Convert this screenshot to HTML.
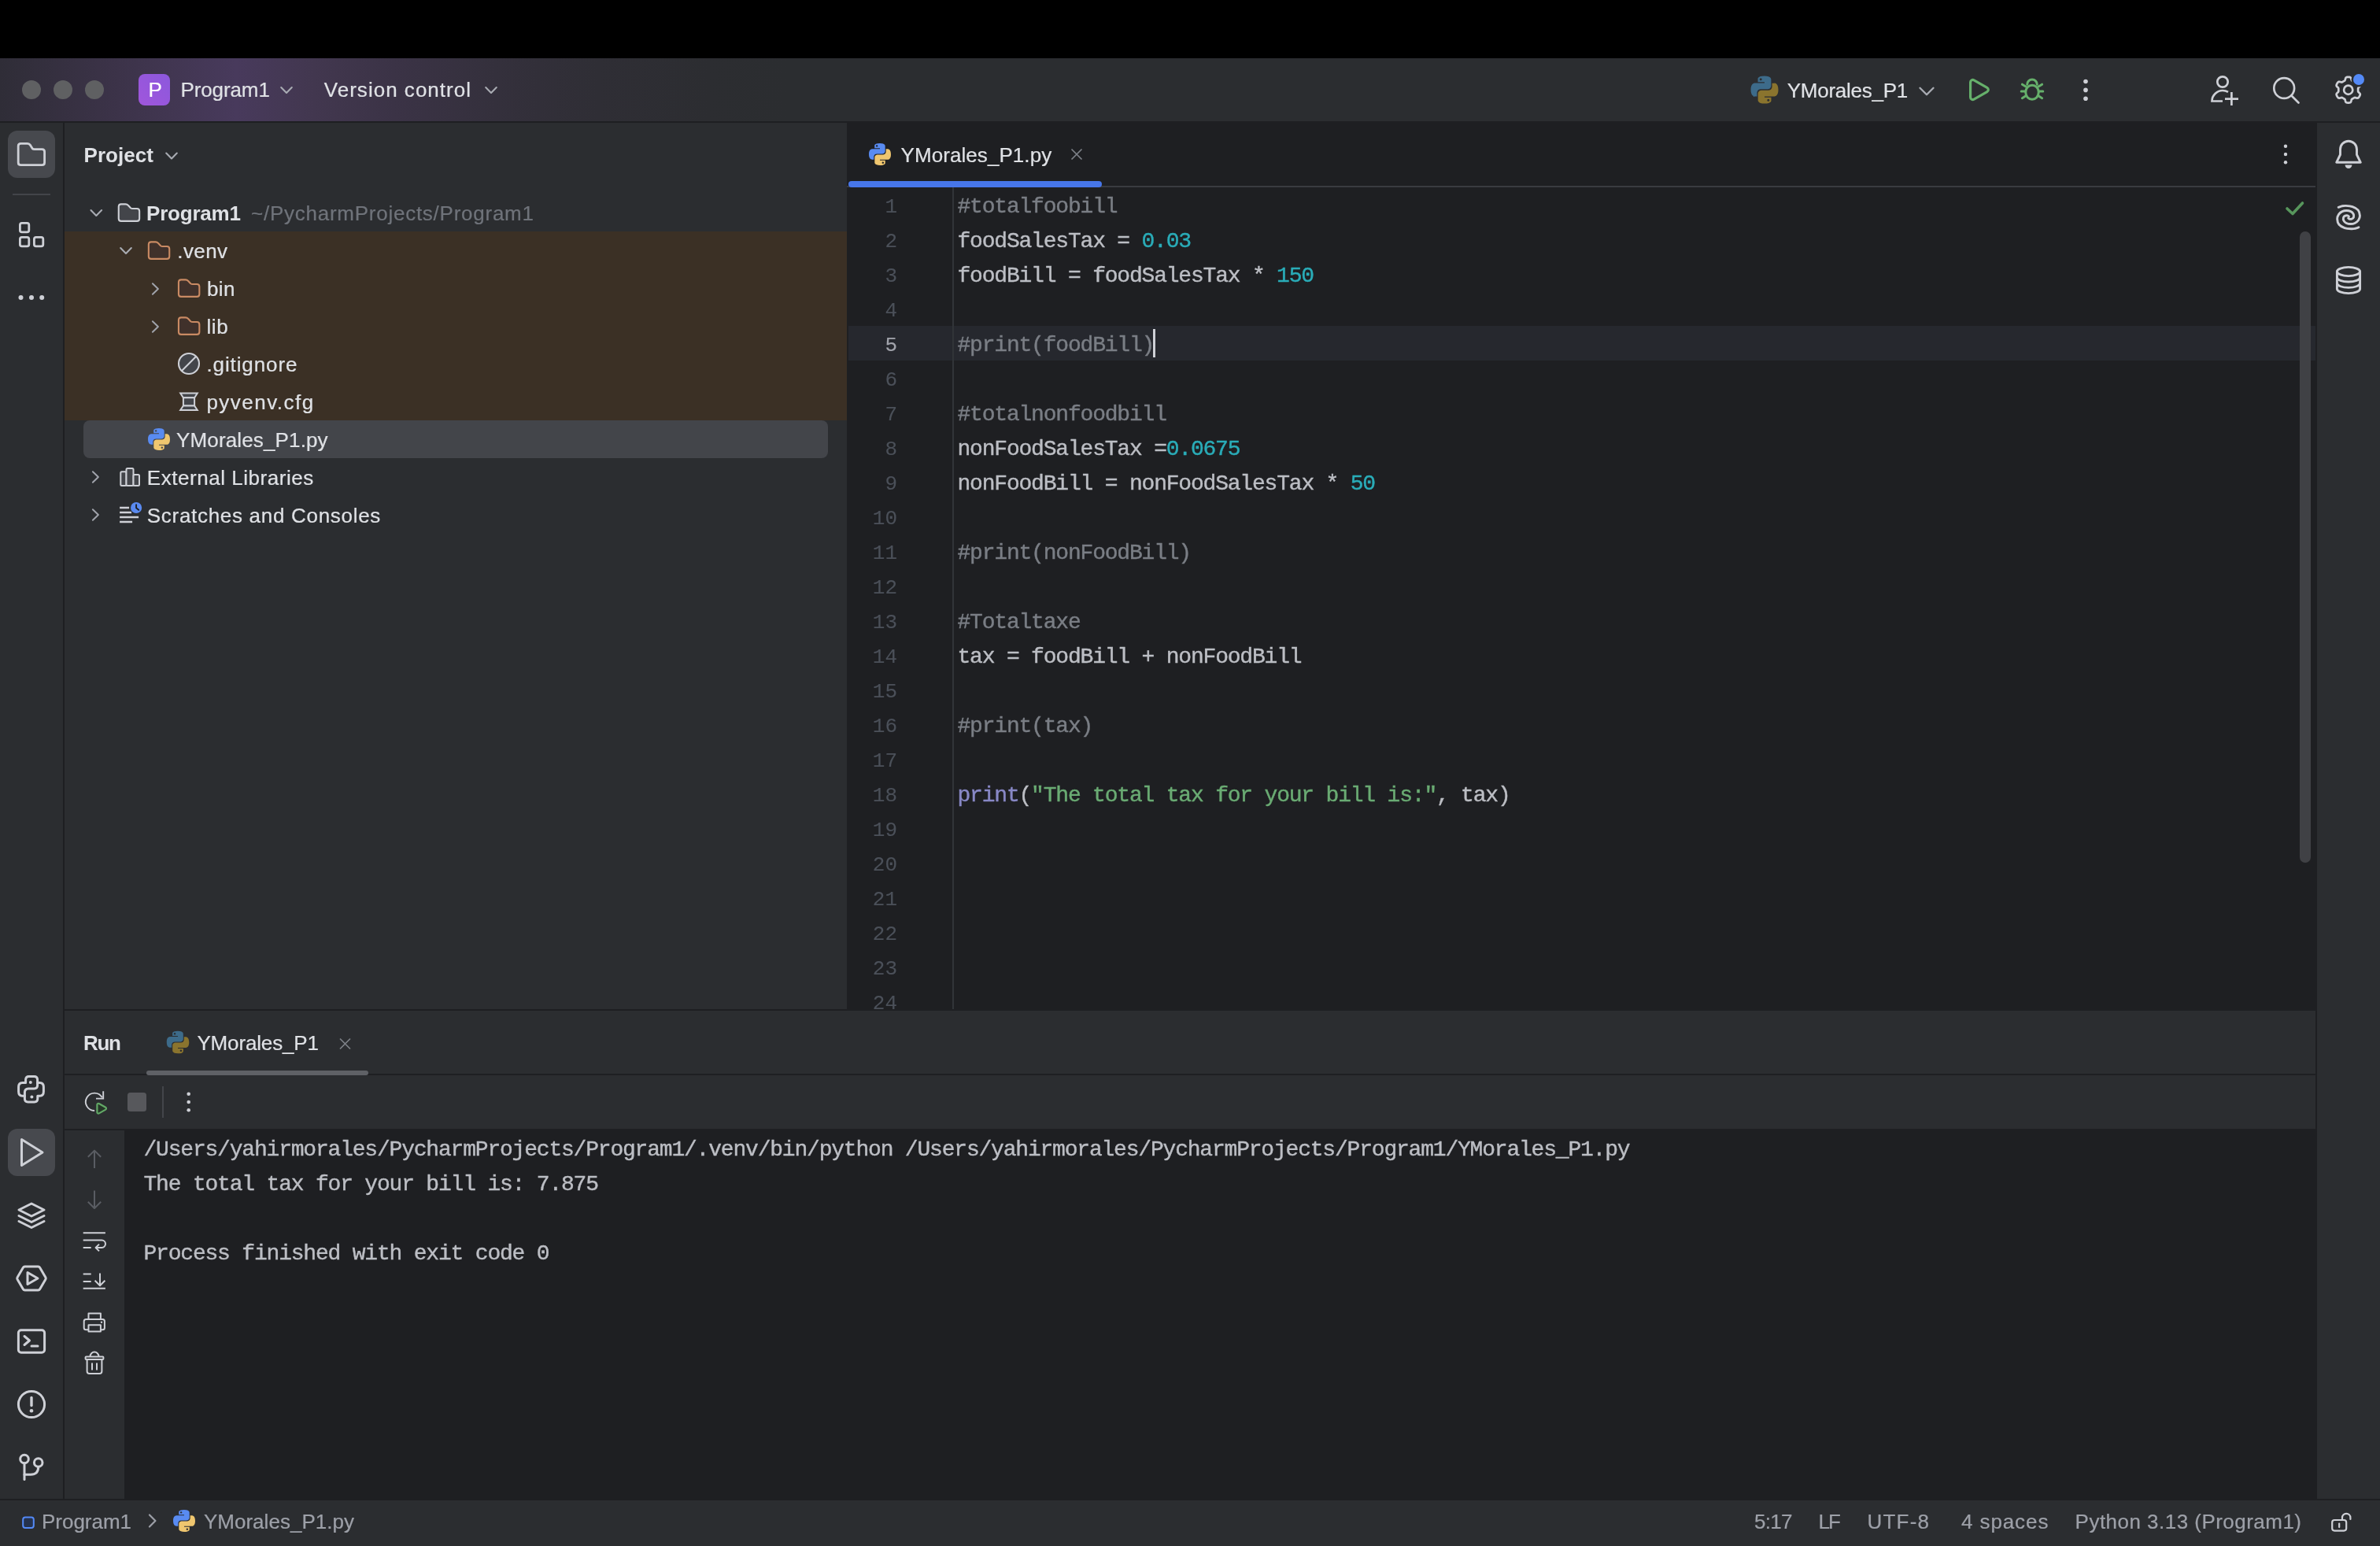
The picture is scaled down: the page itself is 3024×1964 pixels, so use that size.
<!DOCTYPE html>
<html lang="en"><head><meta charset="utf-8"><title>Program1 – YMorales_P1.py</title>
<style>
html,body{margin:0;padding:0;background:#000;}
body{width:3024px;height:1964px;position:relative;overflow:hidden;font-family:"Liberation Sans", sans-serif;font-size:26px;color:#dfe1e5;}
#root div{position:absolute;}
.t{position:absolute;white-space:pre;-webkit-text-stroke:0.22px currentColor;}
svg.ov{position:absolute;left:0;top:0;}

</style></head>
<body><div id="root" style="position:absolute;left:0;top:0;width:3024px;height:1964px;overflow:hidden;background:#2b2d30">
<div style="left:0px;top:0px;width:3024px;height:74px;background:#000;"></div>
<div style="left:0px;top:74px;width:3024px;height:80px;background:#2b2d30;background:linear-gradient(90deg,#2f2d37 0px,#3c3349 150px,#483a5c 300px,#42374f 400px,#3b3346 500px,#34303c 630px,#2f2e35 760px,#2c2d31 900px,#2b2d30 1000px,#2b2d30 100%);"></div>
<div style="left:0px;top:154px;width:3024px;height:2px;background:#1e1f22;"></div>
<div style="left:80px;top:156px;width:2px;height:1748px;background:#1e1f22;"></div>
<div style="left:16px;top:246px;width:48px;height:2px;background:#43454a;"></div>
<div style="left:82px;top:294px;width:994px;height:240px;background:#3b3025;"></div>
<div style="left:1076px;top:156px;width:1866px;height:1126px;background:#1e1f22;"></div>
<div style="left:1076px;top:236px;width:1866px;height:2px;background:#393b40;"></div>
<div style="left:1078px;top:414px;width:1864px;height:44px;background:#26282e;"></div>
<div style="left:1210px;top:238px;width:2px;height:1044px;background:#313438;"></div>
<div style="left:1464.5px;top:418px;width:3px;height:36px;background:#ced0d6;"></div>
<div style="left:2942px;top:156px;width:2px;height:1748px;background:#1e1f22;"></div>
<div style="left:82px;top:1282px;width:2860px;height:2px;background:#1e1f22;"></div>
<div style="left:82px;top:1364px;width:2860px;height:2px;background:#1e1f22;"></div>
<div style="left:206px;top:1380px;width:2px;height:40px;background:#43454a;"></div>
<div style="left:82px;top:1434px;width:2860px;height:2px;background:#1e1f22;"></div>
<div style="left:158px;top:1434px;width:2784px;height:470px;background:#1e1f22;"></div>
<div style="left:0px;top:1904px;width:3024px;height:60px;background:#2b2d30;"></div>
<div style="left:0px;top:1904px;width:3024px;height:2px;background:#1e1f22;"></div>

<svg class="ov" width="3024" height="1964" viewBox="0 0 3024 1964" fill="none">
<defs><linearGradient id="pg" x1="0" y1="1" x2="1" y2="0"><stop offset="0" stop-color="#a056dc"/><stop offset="1" stop-color="#8c58dc"/></linearGradient></defs>
<circle cx="40" cy="114" r="12" fill="#5f6062"/>
<circle cx="80" cy="114" r="12" fill="#5f6062"/>
<circle cx="120" cy="114" r="12" fill="#5f6062"/>
<rect x="176" y="94" width="40" height="40" rx="8" fill="url(#pg)"/>
<path d="M357.2 111.1L364 117.9L370.8 111.1" stroke="#a8abb2" stroke-width="2.1" stroke-linecap="round" stroke-linejoin="round"/>
<path d="M617.2 111.1L624 117.9L630.8 111.1" stroke="#a8abb2" stroke-width="2.1" stroke-linecap="round" stroke-linejoin="round"/>
<path d="M2439.5 111.75L2448 120.25L2456.5 111.75" stroke="#a8abb2" stroke-width="2.4" stroke-linecap="round" stroke-linejoin="round"/>
<g transform="translate(2222.0 94.0) scale(2.5)"><path d="M7.93 1C4.39 1 4.61 2.53 4.61 2.53l.004 1.59h3.38v.48H3.27S1 4.34 1 7.91c0 3.57 1.98 3.44 1.98 3.44h1.18V9.7s-.06-1.98 1.95-1.98h3.35s1.88.03 1.88-1.82V2.84S11.63 1 7.93 1zM6.07 2.07a.61.61 0 110 1.22.61.61 0 010-1.22z" fill="#3d6b8a"/><path d="M8.07 15c3.54 0 3.32-1.53 3.32-1.53l-.004-1.59H8.01v-.48h4.72S15 11.66 15 8.09c0-3.57-1.98-3.44-1.98-3.44h-1.18V6.3s.06 1.98-1.95 1.98H6.54s-1.88-.03-1.88 1.82v3.06S4.37 15 8.07 15zm1.86-1.07a.61.61 0 110-1.22.61.61 0 010 1.22z" fill="#8a742e"/></g>
<path d="M2503.60 104.39A3 3 0 0 1 2508.10 101.79L2524.79 111.40A3 3 0 0 1 2524.79 116.60L2508.10 126.21A3 3 0 0 1 2503.60 123.61Z" stroke="#66b06b" stroke-width="3.2"/>
<g stroke="#66b06b" stroke-width="3" stroke-linecap="round"><rect x="2573.8" y="108.2" width="16.4" height="18" rx="8.2" ry="8.6"/><path d="M2575.7 107.3a6.3 6.3 0 0112.6 0"/><path d="M2573 116h-4.8M2591 116h4.8M2574 110l-4.6-2.8M2590 110l4.6-2.8M2574 121.8l-4.6 2.9M2590 121.8l4.6 2.9"/></g>
<circle cx="2650" cy="103.5" r="2.8" fill="#ced0d6"/>
<circle cx="2650" cy="114.4" r="2.8" fill="#ced0d6"/>
<circle cx="2650" cy="125.30000000000001" r="2.8" fill="#ced0d6"/>
<g stroke="#ced0d6" stroke-width="2.7" stroke-linecap="butt"><circle cx="2824" cy="104" r="6.7"/><path d="M2824 128.5h-13.5c0-8 7-13.5 13.5-13.5 2.5 0 5 .6 7 1.8"/><path d="M2835.4 117v17M2827 125.6h17"/></g>
<g stroke="#ced0d6" stroke-width="2.7" stroke-linecap="round"><circle cx="2902.2" cy="112" r="12.9"/><path d="M2911.5 121.5L2920.5 130.5"/></g>
<path d="M2983.70 97.83L2984.41 97.85L2985.12 97.92L2985.82 98.07L2986.49 98.38L2987.06 99.06L2987.43 100.29L2987.70 101.52L2988.05 102.24L2988.49 102.62L2988.97 102.91L2989.44 103.17L2989.92 103.43L2990.38 103.71L2990.85 103.99L2991.33 104.26L2991.88 104.45L2992.68 104.40L2993.88 104.02L2995.13 103.73L2996.01 103.87L2996.61 104.30L2997.08 104.83L2997.50 105.41L2997.87 106.02L2998.21 106.65L2998.51 107.30L2998.73 107.97L2998.80 108.70L2998.49 109.54L2997.61 110.47L2996.68 111.32L2996.24 111.99L2996.12 112.56L2996.11 113.11L2996.13 113.66L2996.13 114.20L2996.13 114.74L2996.11 115.29L2996.12 115.84L2996.24 116.41L2996.68 117.08L2997.61 117.93L2998.49 118.86L2998.80 119.70L2998.73 120.43L2998.51 121.10L2998.21 121.75L2997.87 122.38L2997.50 122.99L2997.08 123.57L2996.61 124.10L2996.01 124.53L2995.13 124.67L2993.88 124.38L2992.68 124.00L2991.88 123.95L2991.33 124.14L2990.85 124.41L2990.38 124.69L2989.92 124.97L2989.44 125.23L2988.97 125.49L2988.49 125.78L2988.05 126.16L2987.70 126.88L2987.43 128.11L2987.06 129.34L2986.49 130.02L2985.82 130.33L2985.12 130.48L2984.41 130.55L2983.70 130.57L2982.99 130.55L2982.28 130.48L2981.58 130.33L2980.91 130.02L2980.34 129.34L2979.97 128.11L2979.70 126.88L2979.35 126.16L2978.91 125.78L2978.43 125.49L2977.96 125.23L2977.48 124.97L2977.02 124.69L2976.55 124.41L2976.07 124.14L2975.52 123.95L2974.72 124.00L2973.52 124.38L2972.27 124.67L2971.39 124.53L2970.79 124.10L2970.32 123.57L2969.90 122.99L2969.53 122.38L2969.19 121.75L2968.89 121.10L2968.67 120.43L2968.60 119.70L2968.91 118.86L2969.79 117.93L2970.72 117.08L2971.16 116.41L2971.28 115.84L2971.29 115.29L2971.27 114.74L2971.27 114.20L2971.27 113.66L2971.29 113.11L2971.28 112.56L2971.16 111.99L2970.72 111.32L2969.79 110.47L2968.91 109.54L2968.60 108.70L2968.67 107.97L2968.89 107.30L2969.19 106.65L2969.53 106.02L2969.90 105.41L2970.32 104.83L2970.79 104.30L2971.39 103.87L2972.27 103.73L2973.52 104.02L2974.72 104.40L2975.52 104.45L2976.07 104.26L2976.55 103.99L2977.02 103.71L2977.48 103.43L2977.96 103.17L2978.43 102.91L2978.91 102.62L2979.35 102.24L2979.70 101.52L2979.97 100.29L2980.34 99.06L2980.91 98.38L2981.58 98.07L2982.28 97.92L2982.99 97.85Z" stroke="#ced0d6" stroke-width="2.7" stroke-linejoin="round"/>
<circle cx="2983.7" cy="114.2" r="5.6" stroke="#ced0d6" stroke-width="2.7"/>
<circle cx="2997" cy="101" r="9.5" fill="#2b2d30"/><circle cx="2997" cy="101" r="7" fill="#548af7"/>
<rect x="10" y="166" width="60" height="60" rx="12" fill="#47494e"/>
<path d="M23.2 185.6Q23.2 182.4 26.4 182.4H34.732Q36.732 182.4 38.232 184.0L41.232 188.79999999999998Q42.232 189.6 43.732 189.6H53.4Q56.6 189.6 56.6 192.79999999999998V206.4Q56.6 209.6 53.4 209.6H26.4Q23.2 209.6 23.2 206.4Z" fill="none" stroke="#ced0d6" stroke-width="2.8" stroke-linejoin="round"/>
<rect x="25.4" y="283.4" width="11.4" height="11.4" rx="2.4" stroke="#ced0d6" stroke-width="2.8"/>
<rect x="25.4" y="301.4" width="11.4" height="11.4" rx="2.4" stroke="#ced0d6" stroke-width="2.8"/>
<rect x="43.4" y="301.4" width="11.4" height="11.4" rx="2.4" stroke="#ced0d6" stroke-width="2.8"/>
<circle cx="26.5" cy="378" r="3" fill="#ced0d6"/>
<circle cx="40" cy="378" r="3" fill="#ced0d6"/>
<circle cx="53.2" cy="378" r="3" fill="#ced0d6"/>
<g transform="translate(39.5 1383.8)" stroke="#ced0d6" stroke-width="3" stroke-linecap="round" stroke-linejoin="round" stroke-width="2.8"><path d="M-6.9 -8.4V-12Q-6.9 -16.2 -2.7 -16.2H3.9Q8.1 -16.2 8.1 -12V-8.4H11Q15.9 -8.4 15.9 -3V3Q15.9 8.4 11 8.4H8.3V12Q8.3 16.2 4.1 16.2H-3.9Q-8.1 16.2 -8.1 12V8.4H-11Q-15.9 8.4 -15.9 3V-3Q-15.9 -8.4 -11 -8.4Z"/><path d="M8.1 -8.4V-5Q8.1 -0.8 3.9 -0.8H-3.5Q-8.1 -0.6 -8.1 4V8.4"/><circle cx="-0.7" cy="-8.8" r="2" fill="#ced0d6" stroke="none"/><circle cx="0.9" cy="9.6" r="2" fill="#ced0d6" stroke="none"/></g>
<rect x="10" y="1434" width="60" height="60" rx="12" fill="#47494e"/>
<path d="M27.5 1447.5L54 1464L27.5 1480.5Z" stroke="#ced0d6" stroke-width="3" stroke-linecap="round" stroke-linejoin="round"/>
<g transform="translate(40 1544)" stroke="#ced0d6" stroke-width="3" stroke-linecap="round" stroke-linejoin="round"><path d="M0 -15L16 -7L0 1L-16 -7Z"/><path d="M-16 0.5L0 8.5L16 0.5"/><path d="M-16 7.5L0 15.5L16 7.5"/></g>
<g transform="translate(40 1624)" stroke="#ced0d6" stroke-width="3" stroke-linecap="round" stroke-linejoin="round"><path d="M-8.5 -15h17a2.5 2.5 0 012.1 1.2l7.3 12.5a2.5 2.5 0 010 2.6l-7.3 12.5a2.5 2.5 0 01-2.1 1.2h-17a2.5 2.5 0 01-2.1-1.2l-7.3-12.5a2.5 2.5 0 010-2.6l7.3-12.5a2.5 2.5 0 012.1-1.2z"/><path d="M-5 -7.5L8 0L-5 7.5Z"/></g>
<g transform="translate(40 1704)" stroke="#ced0d6" stroke-width="3" stroke-linecap="round" stroke-linejoin="round"><rect x="-16.6" y="-14.2" width="33.2" height="28.4" rx="3.5"/><path d="M-9 -6.5L-2.5 -1L-9 4.5M0 6h8"/></g>
<g transform="translate(40 1784)" stroke="#ced0d6" stroke-width="3" stroke-linecap="round" stroke-linejoin="round"><circle cx="0" cy="0" r="16.6"/><path d="M0 -8.5V1.5" stroke-width="3.4"/><circle cx="0" cy="8.2" r="2.3" fill="#ced0d6" stroke="none"/></g>
<g stroke="#ced0d6" stroke-width="3" stroke-linecap="round" stroke-linejoin="round" stroke-width="2.8"><circle cx="31" cy="1853.5" r="5.3"/><circle cx="48.7" cy="1858" r="5.3"/><path d="M31 1859V1879.5"/><path d="M48.7 1863.5c0 6.5-3.6 9.7-9.7 9.7h-8"/></g>
<path d="M211.2 194.6L218 201.4L224.8 194.6" stroke="#a8abb2" stroke-width="2.1" stroke-linecap="round" stroke-linejoin="round"/>
<rect x="106" y="534" width="946" height="48" rx="8" fill="#43454a"/>
<path d="M115.5 267.1L122.3 273.9L129.1 267.1" stroke="#a8abb2" stroke-width="2.1" stroke-linecap="round" stroke-linejoin="round"/>
<path d="M150.75 262.55Q150.75 259.35 153.95 259.35H159.51Q161.51 259.35 163.01 260.95000000000005L166.01 264.214Q167.01 265.014 168.51 265.014H173.95Q177.14999999999998 265.014 177.14999999999998 268.214V277.65000000000003Q177.14999999999998 280.85 173.95 280.85H153.95Q150.75 280.85 150.75 277.65000000000003Z" fill="#43454a" stroke="#ced0d6" stroke-width="2.1" stroke-linejoin="round"/>
<path d="M153.2 315.1L160 321.9L166.8 315.1" stroke="#a8abb2" stroke-width="2.1" stroke-linecap="round" stroke-linejoin="round"/>
<path d="M188.85000000000002 310.55Q188.85000000000002 307.35 192.05 307.35H197.61Q199.61 307.35 201.11 308.95000000000005L204.11 312.214Q205.11 313.014 206.61 313.014H212.05Q215.25 313.014 215.25 316.214V325.65000000000003Q215.25 328.85 212.05 328.85H192.05Q188.85000000000002 328.85 188.85000000000002 325.65000000000003Z" fill="#40312b" stroke="#c98a63" stroke-width="2.1" stroke-linejoin="round"/>
<path d="M193.9 360.2L200.9 367L193.9 373.8" stroke="#a0a3ab" stroke-width="2.0" stroke-linecap="round" stroke-linejoin="round"/>
<path d="M226.95000000000002 358.55Q226.95000000000002 355.35 230.15 355.35H235.71Q237.71 355.35 239.21 356.95000000000005L242.21 360.214Q243.21 361.014 244.71 361.014H250.15Q253.35 361.014 253.35 364.214V373.65000000000003Q253.35 376.85 250.15 376.85H230.15Q226.95000000000002 376.85 226.95000000000002 373.65000000000003Z" fill="#40312b" stroke="#c98a63" stroke-width="2.1" stroke-linejoin="round"/>
<path d="M193.9 408.2L200.9 415L193.9 421.8" stroke="#a0a3ab" stroke-width="2.0" stroke-linecap="round" stroke-linejoin="round"/>
<path d="M226.95000000000002 406.55Q226.95000000000002 403.35 230.15 403.35H235.71Q237.71 403.35 239.21 404.95000000000005L242.21 408.214Q243.21 409.014 244.71 409.014H250.15Q253.35 409.014 253.35 412.214V421.65000000000003Q253.35 424.85 250.15 424.85H230.15Q226.95000000000002 424.85 226.95000000000002 421.65000000000003Z" fill="#40312b" stroke="#c98a63" stroke-width="2.1" stroke-linejoin="round"/>
<g stroke="#ced0d6" stroke-width="2.1"><circle cx="240" cy="462" r="13" fill="#43454a"/><path d="M230.8 471.2L249.2 452.8"/></g>
<g stroke="#ced0d6" stroke-width="2" fill="#43454a" stroke-linejoin="miter"><path d="M229.2 499.5H250.8L247.1 505.3H232.9Z"/><path d="M232.9 505.3H247.1V515.4H232.9Z"/><path d="M232.9 515.4H247.1L250.8 521H229.2Z"/></g>
<g transform="translate(186.0 542.0) scale(2.0)"><path d="M7.93 1C4.39 1 4.61 2.53 4.61 2.53l.004 1.59h3.38v.48H3.27S1 4.34 1 7.91c0 3.57 1.98 3.44 1.98 3.44h1.18V9.7s-.06-1.98 1.95-1.98h3.35s1.88.03 1.88-1.82V2.84S11.63 1 7.93 1zM6.07 2.07a.61.61 0 110 1.22.61.61 0 010-1.22z" fill="#598bf1"/><path d="M8.07 15c3.54 0 3.32-1.53 3.32-1.53l-.004-1.59H8.01v-.48h4.72S15 11.66 15 8.09c0-3.57-1.98-3.44-1.98-3.44h-1.18V6.3s.06 1.98-1.95 1.98H6.54s-1.88-.03-1.88 1.82v3.06S4.37 15 8.07 15zm1.86-1.07a.61.61 0 110-1.22.61.61 0 010 1.22z" fill="#efc66f"/></g>
<path d="M117.9 599.2L124.9 606L117.9 612.8" stroke="#a0a3ab" stroke-width="2.0" stroke-linecap="round" stroke-linejoin="round"/>
<g stroke="#ced0d6" stroke-width="2" fill="#43454a" stroke-linejoin="round"><rect x="153.3" y="599.3" width="7.2" height="17.7" rx="1.5"/><rect x="160.5" y="595" width="9" height="22" rx="1.5"/><rect x="169.5" y="603.1" width="7.5" height="13.9" rx="1.5"/></g>
<path d="M117.9 647.2L124.9 654L117.9 660.8" stroke="#a0a3ab" stroke-width="2.0" stroke-linecap="round" stroke-linejoin="round"/>
<path d="M152.1 645h12M152.1 651h15M152.1 657h24M152.1 663h16" stroke="#ced0d6" stroke-width="2.3"/>
<circle cx="173.1" cy="645" r="8.2" fill="#2b2d30"/><circle cx="173.1" cy="645" r="7.1" fill="#5a8af0"/><path d="M173.1 641.2v4l3.1 2.6" stroke="#1e1f22" stroke-width="1.9" stroke-linecap="round" stroke-linejoin="round"/>
<rect x="1078" y="230" width="322" height="8" rx="4" fill="#4776e9"/>
<g transform="translate(1102.0 180.0) scale(2.0)"><path d="M7.93 1C4.39 1 4.61 2.53 4.61 2.53l.004 1.59h3.38v.48H3.27S1 4.34 1 7.91c0 3.57 1.98 3.44 1.98 3.44h1.18V9.7s-.06-1.98 1.95-1.98h3.35s1.88.03 1.88-1.82V2.84S11.63 1 7.93 1zM6.07 2.07a.61.61 0 110 1.22.61.61 0 010-1.22z" fill="#598bf1"/><path d="M8.07 15c3.54 0 3.32-1.53 3.32-1.53l-.004-1.59H8.01v-.48h4.72S15 11.66 15 8.09c0-3.57-1.98-3.44-1.98-3.44h-1.18V6.3s.06 1.98-1.95 1.98H6.54s-1.88-.03-1.88 1.82v3.06S4.37 15 8.07 15zm1.86-1.07a.61.61 0 110-1.22.61.61 0 010 1.22z" fill="#efc66f"/></g>
<path d="M1361.5 189.5L1374.5 202.5M1374.5 189.5L1361.5 202.5" stroke="#7d8188" stroke-width="1.7"/>
<circle cx="2904" cy="185.8" r="2.2" fill="#ced0d6"/>
<circle cx="2904" cy="196" r="2.2" fill="#ced0d6"/>
<circle cx="2904" cy="206.2" r="2.2" fill="#ced0d6"/>
<path d="M2906 265L2913 271.5L2925.5 258" stroke="#57965c" stroke-width="3.6" stroke-linecap="round" stroke-linejoin="round"/>
<rect x="2922" y="294" width="14" height="802" rx="7" fill="#404145"/>
<g transform="translate(2984 196)" stroke="#ced0d6" stroke-width="2.9" stroke-linecap="round" stroke-linejoin="round"><path d="M-15.3 10.3L-10.5 0.5V-6.3a10.5 10.5 0 0121 0V0.5L15.3 10.3Z"/><path d="M-4.4 13.6h8.8a4.4 4.4 0 01-8.8 0z" fill="#ced0d6" stroke="none"/></g>
<g transform="translate(2984.05 276.05)" stroke="#ced0d6" stroke-width="2.9" stroke-linecap="round" stroke-linejoin="round" stroke-width="3"><path d="M-12.90 -12.70C-12.17 -12.95 -10.05 -13.87 -8.50 -14.20C-6.95 -14.53 -5.85 -14.82 -3.60 -14.70C-1.35 -14.58 2.38 -14.42 5.00 -13.50C7.62 -12.58 10.53 -11.10 12.10 -9.20C13.67 -7.30 14.33 -4.25 14.40 -2.10C14.47 0.05 13.57 2.12 12.50 3.70C11.43 5.28 9.63 6.60 8.00 7.40C6.37 8.20 4.50 8.50 2.70 8.50C0.90 8.50 -1.33 8.10 -2.80 7.40C-4.27 6.70 -5.48 5.48 -6.10 4.30C-6.72 3.12 -6.80 1.33 -6.50 0.30C-6.20 -0.73 -5.18 -1.48 -4.30 -1.90C-3.42 -2.32 -1.98 -2.35 -1.20 -2.20C-0.42 -2.05 0.13 -1.20 0.40 -1.00"/><path d="M12.90 12.70C12.17 12.95 10.05 13.87 8.50 14.20C6.95 14.53 5.85 14.82 3.60 14.70C1.35 14.58 -2.38 14.42 -5.00 13.50C-7.62 12.58 -10.53 11.10 -12.10 9.20C-13.67 7.30 -14.33 4.25 -14.40 2.10C-14.47 -0.05 -13.57 -2.12 -12.50 -3.70C-11.43 -5.28 -9.63 -6.60 -8.00 -7.40C-6.37 -8.20 -4.50 -8.50 -2.70 -8.50C-0.90 -8.50 1.33 -8.10 2.80 -7.40C4.27 -6.70 5.48 -5.48 6.10 -4.30C6.72 -3.12 6.80 -1.33 6.50 -0.30C6.20 0.73 5.18 1.48 4.30 1.90C3.42 2.32 1.98 2.35 1.20 2.20C0.42 2.05 -0.13 1.20 -0.40 1.00"/></g>
<g transform="translate(2984 356)" stroke="#ced0d6" stroke-width="2.9" stroke-linecap="round" stroke-linejoin="round"><ellipse cx="0" cy="-11" rx="14.6" ry="5.6"/><path d="M-14.6 -11V11c0 3.1 6.5 5.6 14.6 5.6s14.6-2.5 14.6-5.6V-11"/><path d="M-14.6 -3.6c0 3.1 6.5 5.6 14.6 5.6s14.6-2.5 14.6-5.6"/><path d="M-14.6 3.8c0 3.1 6.5 5.6 14.6 5.6s14.6-2.5 14.6-5.6"/></g>
<g transform="translate(209.71428571428572 1307.7142857142858) scale(2.0357142857142856)"><path d="M7.93 1C4.39 1 4.61 2.53 4.61 2.53l.004 1.59h3.38v.48H3.27S1 4.34 1 7.91c0 3.57 1.98 3.44 1.98 3.44h1.18V9.7s-.06-1.98 1.95-1.98h3.35s1.88.03 1.88-1.82V2.84S11.63 1 7.93 1zM6.07 2.07a.61.61 0 110 1.22.61.61 0 010-1.22z" fill="#3d6b8a"/><path d="M8.07 15c3.54 0 3.32-1.53 3.32-1.53l-.004-1.59H8.01v-.48h4.72S15 11.66 15 8.09c0-3.57-1.98-3.44-1.98-3.44h-1.18V6.3s.06 1.98-1.95 1.98H6.54s-1.88-.03-1.88 1.82v3.06S4.37 15 8.07 15zm1.86-1.07a.61.61 0 110-1.22.61.61 0 010 1.22z" fill="#8a742e"/></g>
<path d="M432 1319.5L445 1332.5M445 1319.5L432 1332.5" stroke="#7d8188" stroke-width="1.7"/>
<rect x="186" y="1360" width="282" height="6" rx="3" fill="#5f6166"/>
<g stroke="#ced0d6" stroke-width="1.9" fill="none"><path d="M129.8 1394.2A11.2 11.2 0 10120.1 1411" /><path d="M122 1395.6h9.2v-9.4"/></g>
<path d="M123.40 1403.37A1.6 1.6 0 0 1 125.80 1401.98L134.19 1406.81A1.6 1.6 0 0 1 134.19 1409.59L125.80 1414.42A1.6 1.6 0 0 1 123.40 1413.03Z" fill="#253627" stroke="#62a866" stroke-width="2.2"/>
<rect x="162" y="1388" width="24" height="24" rx="3.5" fill="#57585c"/>
<circle cx="239.7" cy="1389.7" r="2.3" fill="#ced0d6"/>
<circle cx="239.7" cy="1400" r="2.3" fill="#ced0d6"/>
<circle cx="239.7" cy="1410.3" r="2.3" fill="#ced0d6"/>
<g stroke="#5a5d63" stroke-width="2" stroke-linejoin="round"><path d="M120 1484V1461.5M111.8 1469.8l8.2-8.2 8.2 8.2"/><path d="M120 1512.5V1535M111.8 1526.8l8.2 8.2 8.2-8.2"/></g>
<g stroke="#ced0d6" stroke-width="2" stroke-linejoin="round"><path d="M105.7 1566.3h28.2M105.7 1575.6h23.6a4.7 4.7 0 010 9.4H122M105.7 1585h10M126 1580.6l-4.4 4.4 4.4 4.4"/></g>
<g stroke="#ced0d6" stroke-width="2" stroke-linejoin="round"><path d="M105.7 1618.5h10M105.7 1628h10M105.7 1636.7h28.2M127 1617.5v15.5M120.6 1626.8l6.4 6.4 6.4-6.4"/></g>
<g stroke="#ced0d6" stroke-width="2" stroke-linejoin="round"><path d="M112.5 1676v-7.4h15.4v7.4"/><path d="M112.5 1689.3h-3.3a2.5 2.5 0 01-2.5-2.5v-8.3a2.5 2.5 0 012.5-2.5h21.2a2.5 2.5 0 012.5 2.5v8.3a2.5 2.5 0 01-2.5 2.5H127.9"/><rect x="112.5" y="1683.3" width="15.4" height="8.2"/><circle cx="129" cy="1679.8" r="1.2" fill="#ced0d6" stroke="none"/></g>
<g stroke="#ced0d6" stroke-width="2" stroke-linejoin="round"><rect x="108.6" y="1723.4" width="22.8" height="3.6" rx="0.8"/><path d="M114.6 1723a5.4 5.4 0 0110.8 0"/><path d="M110.6 1727.4v14.6a3 3 0 003 3h12.8a3 3 0 003-3v-14.6"/><path d="M117 1731.5v9M123 1731.5v9"/></g>
<rect x="29.2" y="1927.5" width="13.6" height="13.6" rx="3" fill="#25324d" stroke="#548af7" stroke-width="2"/>
<path d="M189.95 1924.5L197.45 1932L189.95 1939.5" stroke="#9da0a8" stroke-width="2.2" stroke-linecap="round" stroke-linejoin="round"/>
<g transform="translate(218.0 1916.0) scale(2.0)"><path d="M7.93 1C4.39 1 4.61 2.53 4.61 2.53l.004 1.59h3.38v.48H3.27S1 4.34 1 7.91c0 3.57 1.98 3.44 1.98 3.44h1.18V9.7s-.06-1.98 1.95-1.98h3.35s1.88.03 1.88-1.82V2.84S11.63 1 7.93 1zM6.07 2.07a.61.61 0 110 1.22.61.61 0 010-1.22z" fill="#598bf1"/><path d="M8.07 15c3.54 0 3.32-1.53 3.32-1.53l-.004-1.59H8.01v-.48h4.72S15 11.66 15 8.09c0-3.57-1.98-3.44-1.98-3.44h-1.18V6.3s.06 1.98-1.95 1.98H6.54s-1.88-.03-1.88 1.82v3.06S4.37 15 8.07 15zm1.86-1.07a.61.61 0 110-1.22.61.61 0 010 1.22z" fill="#efc66f"/></g>
<g stroke="#ced0d6" stroke-width="2.2" stroke-linecap="round"><rect x="2963.2" y="1931" width="18" height="13.6" rx="3"/><path d="M2972.2 1935.5v4.6"/><path d="M2976 1930.5v-2.5a5.2 5.2 0 0110.4 0v2"/></g>
</svg>
<div id="tx" style="left:0;top:0;width:3024px;height:1964px;will-change:transform">
<span class="t" style="left:188.6px;top:92.0px;height:44px;line-height:44px;color:#ffffff;font-size:26px;-webkit-text-stroke:0.2px #fff;">P</span>
<span class="t" style="left:229.4px;top:92.0px;height:44px;line-height:44px;color:#dfe1e5;font-size:26px;letter-spacing:-0.094px;">Program1</span>
<span class="t" style="left:411.8px;top:92.0px;height:44px;line-height:44px;color:#dfe1e5;font-size:26px;letter-spacing:1.015px;">Version control</span>
<span class="t" style="left:2270.7px;top:92.5px;height:44px;line-height:44px;color:#dfe1e5;font-size:26px;letter-spacing:-0.248px;">YMorales_P1</span>
<span class="t" style="left:106.5px;top:175.0px;height:44px;line-height:44px;color:#dfe1e5;font-size:26px;font-weight:bold;letter-spacing:0.057px;-webkit-text-stroke:0;">Project</span>
<span class="t" style="left:186px;top:249.0px;height:44px;line-height:44px;color:#dfe1e5;font-size:26px;font-weight:bold;letter-spacing:-0.199px;-webkit-text-stroke:0;">Program1</span>
<span class="t" style="left:319px;top:249.0px;height:44px;line-height:44px;color:#6f737a;font-size:26px;letter-spacing:0.748px;">~/PycharmProjects/Program1</span>
<span class="t" style="left:225.3px;top:297.0px;height:44px;line-height:44px;color:#dfe1e5;font-size:26px;letter-spacing:0.386px;">.venv</span>
<span class="t" style="left:262.9px;top:345.0px;height:44px;line-height:44px;color:#dfe1e5;font-size:26px;letter-spacing:0.398px;">bin</span>
<span class="t" style="left:262.4px;top:393.0px;height:44px;line-height:44px;color:#dfe1e5;font-size:26px;letter-spacing:0.642px;">lib</span>
<span class="t" style="left:262.4px;top:441.0px;height:44px;line-height:44px;color:#dfe1e5;font-size:26px;letter-spacing:0.903px;">.gitignore</span>
<span class="t" style="left:262.4px;top:489.0px;height:44px;line-height:44px;color:#dfe1e5;font-size:26px;letter-spacing:1.505px;">pyvenv.cfg</span>
<span class="t" style="left:224px;top:537.0px;height:44px;line-height:44px;color:#dfe1e5;font-size:26px;letter-spacing:0.141px;">YMorales_P1.py</span>
<span class="t" style="left:186.8px;top:585.0px;height:44px;line-height:44px;color:#dfe1e5;font-size:26px;letter-spacing:0.54px;">External Libraries</span>
<span class="t" style="left:186.8px;top:633.0px;height:44px;line-height:44px;color:#dfe1e5;font-size:26px;letter-spacing:0.699px;">Scratches and Consoles</span>
<span class="t" style="left:1144.6px;top:175.0px;height:44px;line-height:44px;color:#dfe1e5;font-size:26px;letter-spacing:0.064px;">YMorales_P1.py</span>
<span class="t" style="left:1216.5px;top:240.5px;height:44px;line-height:44px;color:#7a7e85;font-size:28px;font-family:'Liberation Mono', monospace;letter-spacing:-1.2px;-webkit-text-stroke:0.42px currentColor;">#totalfoobill</span>
<span class="t" style="left:1216.5px;top:284.5px;height:44px;line-height:44px;color:#bcbec4;font-size:28px;font-family:'Liberation Mono', monospace;letter-spacing:-1.2px;-webkit-text-stroke:0.42px currentColor;">foodSalesTax = </span>
<span class="t" style="left:1450.5px;top:284.5px;height:44px;line-height:44px;color:#2aacb8;font-size:28px;font-family:'Liberation Mono', monospace;letter-spacing:-1.2px;-webkit-text-stroke:0.42px currentColor;">0.03</span>
<span class="t" style="left:1216.5px;top:328.5px;height:44px;line-height:44px;color:#bcbec4;font-size:28px;font-family:'Liberation Mono', monospace;letter-spacing:-1.2px;-webkit-text-stroke:0.42px currentColor;">foodBill = foodSalesTax * </span>
<span class="t" style="left:1622.1px;top:328.5px;height:44px;line-height:44px;color:#2aacb8;font-size:28px;font-family:'Liberation Mono', monospace;letter-spacing:-1.2px;-webkit-text-stroke:0.42px currentColor;">150</span>
<span class="t" style="left:1216.5px;top:416.5px;height:44px;line-height:44px;color:#7a7e85;font-size:28px;font-family:'Liberation Mono', monospace;letter-spacing:-1.2px;-webkit-text-stroke:0.42px currentColor;">#print(foodBill)</span>
<span class="t" style="left:1216.5px;top:504.5px;height:44px;line-height:44px;color:#7a7e85;font-size:28px;font-family:'Liberation Mono', monospace;letter-spacing:-1.2px;-webkit-text-stroke:0.42px currentColor;">#totalnonfoodbill</span>
<span class="t" style="left:1216.5px;top:548.5px;height:44px;line-height:44px;color:#bcbec4;font-size:28px;font-family:'Liberation Mono', monospace;letter-spacing:-1.2px;-webkit-text-stroke:0.42px currentColor;">nonFoodSalesTax =</span>
<span class="t" style="left:1481.7px;top:548.5px;height:44px;line-height:44px;color:#2aacb8;font-size:28px;font-family:'Liberation Mono', monospace;letter-spacing:-1.2px;-webkit-text-stroke:0.42px currentColor;">0.0675</span>
<span class="t" style="left:1216.5px;top:592.5px;height:44px;line-height:44px;color:#bcbec4;font-size:28px;font-family:'Liberation Mono', monospace;letter-spacing:-1.2px;-webkit-text-stroke:0.42px currentColor;">nonFoodBill = nonFoodSalesTax * </span>
<span class="t" style="left:1715.7px;top:592.5px;height:44px;line-height:44px;color:#2aacb8;font-size:28px;font-family:'Liberation Mono', monospace;letter-spacing:-1.2px;-webkit-text-stroke:0.42px currentColor;">50</span>
<span class="t" style="left:1216.5px;top:680.5px;height:44px;line-height:44px;color:#7a7e85;font-size:28px;font-family:'Liberation Mono', monospace;letter-spacing:-1.2px;-webkit-text-stroke:0.42px currentColor;">#print(nonFoodBill)</span>
<span class="t" style="left:1216.5px;top:768.5px;height:44px;line-height:44px;color:#7a7e85;font-size:28px;font-family:'Liberation Mono', monospace;letter-spacing:-1.2px;-webkit-text-stroke:0.42px currentColor;">#Totaltaxe</span>
<span class="t" style="left:1216.5px;top:812.5px;height:44px;line-height:44px;color:#bcbec4;font-size:28px;font-family:'Liberation Mono', monospace;letter-spacing:-1.2px;-webkit-text-stroke:0.42px currentColor;">tax = foodBill + nonFoodBill</span>
<span class="t" style="left:1216.5px;top:900.5px;height:44px;line-height:44px;color:#7a7e85;font-size:28px;font-family:'Liberation Mono', monospace;letter-spacing:-1.2px;-webkit-text-stroke:0.42px currentColor;">#print(tax)</span>
<span class="t" style="left:1216.5px;top:988.5px;height:44px;line-height:44px;color:#8888c6;font-size:28px;font-family:'Liberation Mono', monospace;letter-spacing:-1.2px;-webkit-text-stroke:0.42px currentColor;">print</span>
<span class="t" style="left:1294.5px;top:988.5px;height:44px;line-height:44px;color:#bcbec4;font-size:28px;font-family:'Liberation Mono', monospace;letter-spacing:-1.2px;-webkit-text-stroke:0.42px currentColor;">(</span>
<span class="t" style="left:1310.1px;top:988.5px;height:44px;line-height:44px;color:#6aab73;font-size:28px;font-family:'Liberation Mono', monospace;letter-spacing:-1.2px;-webkit-text-stroke:0.42px currentColor;">"The total tax for your bill is:"</span>
<span class="t" style="left:1824.9px;top:988.5px;height:44px;line-height:44px;color:#bcbec4;font-size:28px;font-family:'Liberation Mono', monospace;letter-spacing:-1.2px;-webkit-text-stroke:0.42px currentColor;">, tax)</span>
<span class="t" style="left:1124.4px;top:240.5px;height:44px;line-height:44px;color:#4b5059;font-size:26px;font-family:'Liberation Mono', monospace;-webkit-text-stroke:0.1px currentColor;">1</span>
<span class="t" style="left:1124.4px;top:284.5px;height:44px;line-height:44px;color:#4b5059;font-size:26px;font-family:'Liberation Mono', monospace;-webkit-text-stroke:0.1px currentColor;">2</span>
<span class="t" style="left:1124.4px;top:328.5px;height:44px;line-height:44px;color:#4b5059;font-size:26px;font-family:'Liberation Mono', monospace;-webkit-text-stroke:0.1px currentColor;">3</span>
<span class="t" style="left:1124.4px;top:372.5px;height:44px;line-height:44px;color:#4b5059;font-size:26px;font-family:'Liberation Mono', monospace;-webkit-text-stroke:0.1px currentColor;">4</span>
<span class="t" style="left:1124.4px;top:416.5px;height:44px;line-height:44px;color:#a1a3ab;font-size:26px;font-family:'Liberation Mono', monospace;-webkit-text-stroke:0.1px currentColor;">5</span>
<span class="t" style="left:1124.4px;top:460.5px;height:44px;line-height:44px;color:#4b5059;font-size:26px;font-family:'Liberation Mono', monospace;-webkit-text-stroke:0.1px currentColor;">6</span>
<span class="t" style="left:1124.4px;top:504.5px;height:44px;line-height:44px;color:#4b5059;font-size:26px;font-family:'Liberation Mono', monospace;-webkit-text-stroke:0.1px currentColor;">7</span>
<span class="t" style="left:1124.4px;top:548.5px;height:44px;line-height:44px;color:#4b5059;font-size:26px;font-family:'Liberation Mono', monospace;-webkit-text-stroke:0.1px currentColor;">8</span>
<span class="t" style="left:1124.4px;top:592.5px;height:44px;line-height:44px;color:#4b5059;font-size:26px;font-family:'Liberation Mono', monospace;-webkit-text-stroke:0.1px currentColor;">9</span>
<span class="t" style="left:1108.8px;top:636.5px;height:44px;line-height:44px;color:#4b5059;font-size:26px;font-family:'Liberation Mono', monospace;-webkit-text-stroke:0.1px currentColor;">10</span>
<span class="t" style="left:1108.8px;top:680.5px;height:44px;line-height:44px;color:#4b5059;font-size:26px;font-family:'Liberation Mono', monospace;-webkit-text-stroke:0.1px currentColor;">11</span>
<span class="t" style="left:1108.8px;top:724.5px;height:44px;line-height:44px;color:#4b5059;font-size:26px;font-family:'Liberation Mono', monospace;-webkit-text-stroke:0.1px currentColor;">12</span>
<span class="t" style="left:1108.8px;top:768.5px;height:44px;line-height:44px;color:#4b5059;font-size:26px;font-family:'Liberation Mono', monospace;-webkit-text-stroke:0.1px currentColor;">13</span>
<span class="t" style="left:1108.8px;top:812.5px;height:44px;line-height:44px;color:#4b5059;font-size:26px;font-family:'Liberation Mono', monospace;-webkit-text-stroke:0.1px currentColor;">14</span>
<span class="t" style="left:1108.8px;top:856.5px;height:44px;line-height:44px;color:#4b5059;font-size:26px;font-family:'Liberation Mono', monospace;-webkit-text-stroke:0.1px currentColor;">15</span>
<span class="t" style="left:1108.8px;top:900.5px;height:44px;line-height:44px;color:#4b5059;font-size:26px;font-family:'Liberation Mono', monospace;-webkit-text-stroke:0.1px currentColor;">16</span>
<span class="t" style="left:1108.8px;top:944.5px;height:44px;line-height:44px;color:#4b5059;font-size:26px;font-family:'Liberation Mono', monospace;-webkit-text-stroke:0.1px currentColor;">17</span>
<span class="t" style="left:1108.8px;top:988.5px;height:44px;line-height:44px;color:#4b5059;font-size:26px;font-family:'Liberation Mono', monospace;-webkit-text-stroke:0.1px currentColor;">18</span>
<span class="t" style="left:1108.8px;top:1032.5px;height:44px;line-height:44px;color:#4b5059;font-size:26px;font-family:'Liberation Mono', monospace;-webkit-text-stroke:0.1px currentColor;">19</span>
<span class="t" style="left:1108.8px;top:1076.5px;height:44px;line-height:44px;color:#4b5059;font-size:26px;font-family:'Liberation Mono', monospace;-webkit-text-stroke:0.1px currentColor;">20</span>
<span class="t" style="left:1108.8px;top:1120.5px;height:44px;line-height:44px;color:#4b5059;font-size:26px;font-family:'Liberation Mono', monospace;-webkit-text-stroke:0.1px currentColor;">21</span>
<span class="t" style="left:1108.8px;top:1164.5px;height:44px;line-height:44px;color:#4b5059;font-size:26px;font-family:'Liberation Mono', monospace;-webkit-text-stroke:0.1px currentColor;">22</span>
<span class="t" style="left:1108.8px;top:1208.5px;height:44px;line-height:44px;color:#4b5059;font-size:26px;font-family:'Liberation Mono', monospace;-webkit-text-stroke:0.1px currentColor;">23</span>
<span class="t" style="left:1108.8px;top:1252.5px;height:44px;line-height:44px;color:#4b5059;font-size:26px;font-family:'Liberation Mono', monospace;-webkit-text-stroke:0.1px currentColor;">24</span>
<span class="t" style="left:105.9px;top:1303.0px;height:44px;line-height:44px;color:#dfe1e5;font-size:26px;font-weight:bold;letter-spacing:-1.223px;-webkit-text-stroke:0;">Run</span>
<span class="t" style="left:250.4px;top:1303.0px;height:44px;line-height:44px;color:#dfe1e5;font-size:26px;letter-spacing:-0.148px;">YMorales_P1</span>
<span class="t" style="left:182.5px;top:1438.6px;height:44px;line-height:44px;color:#bcbec4;font-size:28px;font-family:'Liberation Mono', monospace;letter-spacing:-1.2px;-webkit-text-stroke:0.42px currentColor;">/Users/yahirmorales/PycharmProjects/Program1/.venv/bin/python /Users/yahirmorales/PycharmProjects/Program1/YMorales_P1.py</span>
<span class="t" style="left:182.5px;top:1482.6px;height:44px;line-height:44px;color:#bcbec4;font-size:28px;font-family:'Liberation Mono', monospace;letter-spacing:-1.2px;-webkit-text-stroke:0.42px currentColor;">The total tax for your bill is: 7.875</span>
<span class="t" style="left:182.5px;top:1570.6px;height:44px;line-height:44px;color:#bcbec4;font-size:28px;font-family:'Liberation Mono', monospace;letter-spacing:-1.2px;-webkit-text-stroke:0.42px currentColor;">Process finished with exit code 0</span>
<span class="t" style="left:53px;top:1911.0px;height:44px;line-height:44px;color:#9da0a8;font-size:26px;letter-spacing:-0.022px;">Program1</span>
<span class="t" style="left:258.9px;top:1911.0px;height:44px;line-height:44px;color:#9da0a8;font-size:26px;letter-spacing:0.026px;">YMorales_P1.py</span>
<span class="t" style="left:2229px;top:1911.0px;height:44px;line-height:44px;color:#9da0a8;font-size:26px;letter-spacing:-0.736px;">5:17</span>
<span class="t" style="left:2310.5px;top:1911.0px;height:44px;line-height:44px;color:#9da0a8;font-size:26px;letter-spacing:-1.844px;">LF</span>
<span class="t" style="left:2372.5px;top:1911.0px;height:44px;line-height:44px;color:#9da0a8;font-size:26px;letter-spacing:1.207px;">UTF-8</span>
<span class="t" style="left:2492px;top:1911.0px;height:44px;line-height:44px;color:#9da0a8;font-size:26px;letter-spacing:0.903px;">4 spaces</span>
<span class="t" style="left:2636.6px;top:1911.0px;height:44px;line-height:44px;color:#9da0a8;font-size:26px;letter-spacing:0.473px;">Python 3.13 (Program1)</span>
</div>
</div></body></html>
